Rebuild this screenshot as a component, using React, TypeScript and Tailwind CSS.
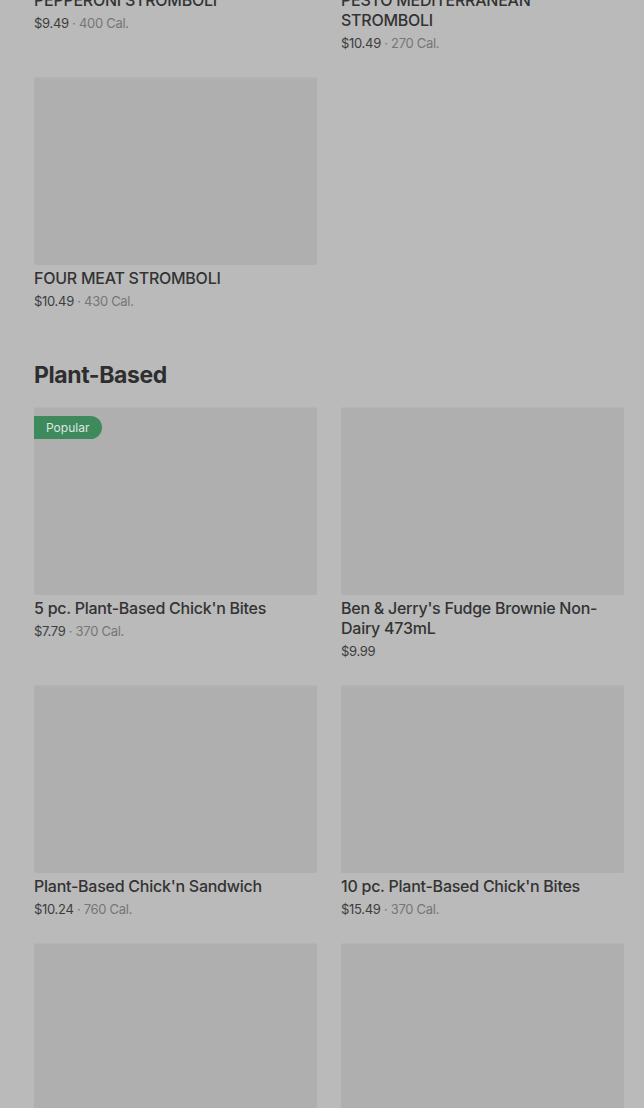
import React from 'react';

type Item = { name: string; price: string; cal?: string; popular?: boolean };

const STROMBOLI: Item[] = [
  { name: 'PEPPERONI STROMBOLI', price: '$9.49', cal: '400 Cal.' },
  { name: 'PESTO MEDITERRANEAN STROMBOLI', price: '$10.49', cal: '270 Cal.' },
  { name: 'FOUR MEAT STROMBOLI', price: '$10.49', cal: '430 Cal.' },
];

const PLANT: Item[] = [
  { name: "5 pc. Plant-Based Chick'n Bites", price: '$7.79', cal: '370 Cal.', popular: true },
  { name: "Ben & Jerry's Fudge Brownie Non-Dairy 473mL", price: '$9.99' },
  { name: "Plant-Based Chick'n Sandwich", price: '$10.24', cal: '760 Cal.' },
  { name: "10 pc. Plant-Based Chick'n Bites", price: '$15.49', cal: '370 Cal.' },
  { name: "Plant-Based Chick'n Wrap", price: '$9.49', cal: '520 Cal.' },
  { name: "20 pc. Plant-Based Chick'n Bites", price: '$27.99', cal: '740 Cal.' },
];

function ItemCard({ item }: { item: Item }) {
  return (
    <div className="flex flex-col">
      <div className="relative h-[188px] bg-[#afafaf] rounded-[2px] border-t border-[#b4b4b4]">
        {item.popular && (
          <span className="absolute left-0 top-[8px] h-[23px] pl-[12px] pr-[13px] flex items-center rounded-r-full bg-[#3f8a5d] text-[12px] text-[#dfe6e1]">
            Popular
          </span>
        )}
      </div>
      <div className="mt-[3px] text-[16px] leading-[20px] font-medium tracking-[-0.25px] text-[#333333]">
        {item.name}
      </div>
      <div className="mt-[4px] text-[13px] leading-[18px] tracking-[-0.3px] text-[#3d3d3d]">
        {item.price}
        {item.cal && <span className="text-[#767676]"> · {item.cal}</span>}
      </div>
    </div>
  );
}

export default function App() {
  return (
    <div
      className="w-[644px] h-[1108px] overflow-hidden bg-[#bababa]"
      style={{ fontFamily: 'Inter, "Noto Sans", sans-serif' }}
    >
      <div className="pl-[34px] pr-[20px] mt-[-201px]">
        <div className="grid grid-cols-2 gap-x-[24px] gap-y-[25px]">
          {STROMBOLI.map((it) => (
            <ItemCard key={it.name} item={it} />
          ))}
        </div>
        <h2 className="mt-[49px] mb-[16px] text-[23px] leading-[32px] font-bold text-[#2e2e2e] tracking-[-0.4px]">
          Plant-Based
        </h2>
        <div className="grid grid-cols-2 gap-x-[24px] gap-y-[25px]">
          {PLANT.map((it) => (
            <ItemCard key={it.name} item={it} />
          ))}
        </div>
      </div>
    </div>
  );
}
